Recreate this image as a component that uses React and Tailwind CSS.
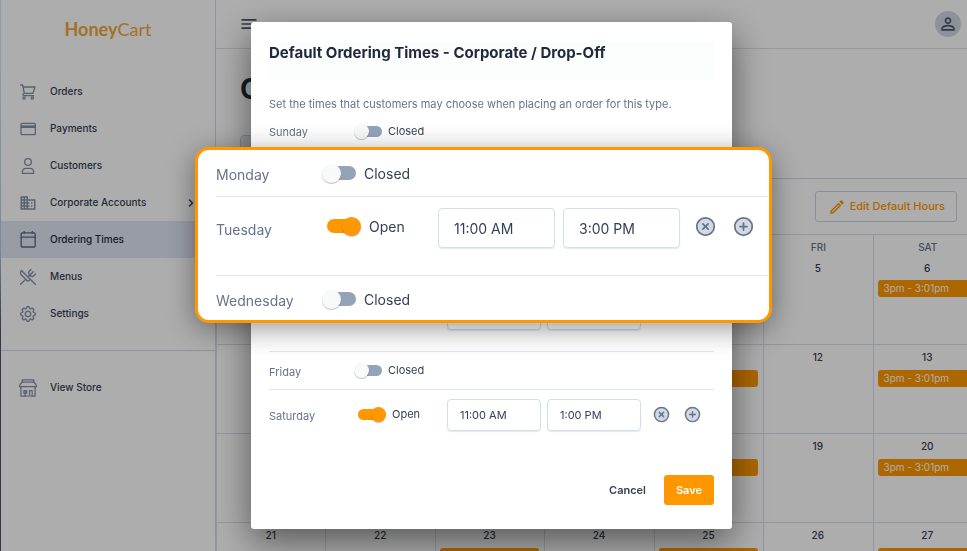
import React from "react";
import { CircleX, CirclePlus, ChevronRight, UtensilsCrossed } from "lucide-react";
import { BsGear } from "react-icons/bs";
import { MdDomain, MdOutlineEdit, MdPersonOutline, MdMenu } from "react-icons/md";

const line = { fill: "none", stroke: "currentColor", strokeWidth: 4, strokeLinecap: "round", strokeLinejoin: "round" };

const CartIcon = () => (
  <svg viewBox="0 0 48 48" className="size-4" {...line}>
    <path d="M2 3h6l5 25h26l6-19H9M13 28c-6 1-5 7 0 7h28" />
    <circle cx="12" cy="42" r="3.5" />
    <circle cx="37" cy="42" r="3.5" />
  </svg>
);
const CardIcon = () => (
  <svg viewBox="0 0 48 48" className="size-4" {...line}>
    <rect x="3" y="7" width="43" height="34" rx="3" />
    <path d="M3 17h43" strokeWidth="8" strokeLinecap="butt" />
  </svg>
);
const PersonIcon = () => (
  <svg viewBox="0 0 48 48" className="size-4" {...line}>
    <circle cx="24" cy="12" r="10" />
    <path d="M7 46v-3c0-7 5-12 11-12h12c6 0 11 5 11 12v3z" />
  </svg>
);
const CalendarIcon = () => (
  <svg viewBox="0 0 48 52" className="h-[17px] w-4" {...line}>
    <rect x="3" y="6" width="43" height="43" rx="3" />
    <path d="M3 19h43M12 1v6M37 1v6" />
  </svg>
);
const StoreIcon = () => (
  <svg viewBox="0 0 56 56" className="size-[18px]" {...line}>
    <path d="M10 3h36v7H10zM8 11l-6 9v4h52v-4l-6-9M6 27v26h13V37M50 27v26H37" />
    <path d="M33 53V36h8v17M15 36h9v8h-9zM19 53h14" strokeWidth="3.5" />
  </svg>
);

const NAV = [
  { label: "Orders", icon: <CartIcon /> },
  { label: "Payments", icon: <CardIcon /> },
  { label: "Customers", icon: <PersonIcon /> },
  { label: "Corporate Accounts", icon: <MdDomain className="size-[18px]" />, more: true },
  { label: "Ordering Times", icon: <CalendarIcon />, active: true },
  { label: "Menus", icon: <UtensilsCrossed className="size-[18px]" strokeWidth={1.8} /> },
  { label: "Settings", icon: <BsGear className="size-4" strokeWidth={0.4} /> },
];

function NavItem({ label, icon, more, active }) {
  return (
    <a
      href="#"
      aria-current={active ? "page" : undefined}
      className={`flex h-[37px] items-center pr-[18px] pl-[17px] text-[10px] font-medium ${active ? "bg-[#e0e6f2] text-[#1e293b]" : "text-[#334155]"}`}
    >
      <span className={`mr-3 flex w-5 justify-center ${active ? "text-[#5b6980]" : "text-[#8290a6]"}`}>{icon}</span>
      <span className="flex-1">{label}</span>
      {more && <ChevronRight className="size-3" strokeWidth={3} />}
    </a>
  );
}

function Sidebar() {
  return (
    <aside className="flex w-[216px] shrink-0 border-r border-[#d3dae6]">
      <div className="w-px bg-linear-to-b from-[#d5e2f4] from-10% via-[#b6c8e6] via-45% to-[#4b5563] to-60%" />
      <div className="flex-1">
        <div className="flex h-[58px] items-center justify-center font-['Lato',sans-serif] text-[18px] text-[#f0a63c]">
          <span className="font-bold">Honey</span>
          <span>Cart</span>
        </div>
        <nav className="pt-[15px]">
          {NAV.map((n) => (
            <NavItem key={n.label} {...n} />
          ))}
          <div className="mt-[18px] border-t border-[#d3dae6] pt-[18px]">
            <NavItem label="View Store" icon={<StoreIcon />} />
          </div>
        </nav>
      </div>
    </aside>
  );
}

const WEEKDAYS = ["SUN", "MON", "TUE", "WED", "THU", "FRI", "SAT"];
const OPEN_COLUMNS = [2, 4, 6];
const WEEKS = [
  ["", 1, 2, 3, 4, 5, 6],
  [7, 8, 9, 10, 11, 12, 13],
  [14, 15, 16, 17, 18, 19, 20],
  [21, 22, 23, 24, 25, 26, 27],
];

function Calendar() {
  return (
    <table className="w-[767px] table-fixed border-collapse">
      <thead>
        <tr>
          {WEEKDAYS.map((d) => (
            <th key={d} className="h-[21px] border-x border-t border-[#d8deea] p-0 pt-1 text-[10px] font-medium text-[#64748b]">
              {d}
            </th>
          ))}
        </tr>
      </thead>
      <tbody>
        {WEEKS.map((week, w) => (
          <tr key={w}>
            {week.map((day, c) => (
              <td
                key={c}
                className="h-[89px] border-x border-b border-[#d8deea] p-0 pt-1 pr-[5px] pl-1 text-center align-top text-[10px] font-medium text-[#334155]"
              >
                <div className="h-4 leading-4">{day}</div>
                {OPEN_COLUMNS.includes(c) && day && (
                  <div
                    className={`h-[17px] rounded-[3px] bg-[#ff9800] px-1.5 text-left leading-[17px] font-normal text-white ${w ? "mt-[5px]" : "mt-1"}`}
                  >
                    3pm - 3:01pm
                  </div>
                )}
              </td>
            ))}
          </tr>
        ))}
      </tbody>
    </table>
  );
}

function Page() {
  return (
    <div className="flex h-screen overflow-hidden bg-white">
      <Sidebar />
      <main className="min-w-0 flex-1 overflow-hidden">
        <header className="flex h-[49px] items-center justify-between border-b border-[#dde2ec] pr-[6px] pl-[23px]">
          <button aria-label="Menu" className="text-[#475569]">
            <MdMenu className="size-5" />
          </button>
          <button aria-label="Account" className="flex size-[26px] items-center justify-center rounded-full bg-[#d0d6e2] text-[#475569]">
            <MdPersonOutline className="size-5" />
          </button>
        </header>
        <div className="h-[129px] pt-5 pl-6">
          <h1 className="text-[28px] leading-10 font-bold text-[#1e293b]">Ordering Times</h1>
          <button className="mt-[26px] h-8 w-28 rounded-t border border-[#cbd5e1] bg-[#e9edf5] text-[11px]">Corporate</button>
        </div>
        <div className="flex h-14 items-center justify-end border-t border-[#d3d8e8] pr-[10px]">
          <button className="flex h-[31px] items-center gap-1 rounded-[3px] border border-[#cbd5e1] pr-[11px] pl-3 text-[11px] font-medium text-[#ff9800]">
            <MdOutlineEdit className="size-[18px]" />
            Edit Default Hours
          </button>
        </div>
        <Calendar />
      </main>
    </div>
  );
}

const SIZES = {
  normal: {
    text: "text-[11px]",
    day: "w-[85px]",
    dayBox: "h-8",
    first: "h-9",
    closed: "h-[38px]",
    open: "h-[63px] pt-[9px]",
    switchBox: "h-[30px]",
    track: "h-[11px] w-6",
    knob: "size-[15px]",
    gap: "mr-1.5",
    openPad: "pl-1",
    toggleWidth: "w-[93px]",
    field: "h-8 w-[94px] px-3 mr-1.5",
    icon: "size-[17px]",
    fieldsEnd: "ml-1.5 gap-[14px]",
  },
  large: {
    text: "text-[14px]",
    day: "w-[106px]",
    dayBox: "h-10",
    first: "h-[46px]",
    closed: "h-[47px]",
    open: "h-[79px] pt-[11px]",
    switchBox: "h-9",
    track: "h-[14px] w-[30px]",
    knob: "size-[19px]",
    gap: "mr-2",
    openPad: "pl-[5px]",
    toggleWidth: "w-[116px]",
    field: "h-10 w-[117px] px-[15px] mr-2",
    icon: "size-[21px]",
    fieldsEnd: "ml-[7px] gap-[17px]",
  },
};

function Toggle({ on, s, label }) {
  return (
    <label className={`flex items-center ${s.text} ${s.toggleWidth} ${s.switchBox} ${on ? s.openPad : ""} text-[#334155]`}>
      <input type="checkbox" role="switch" aria-label={label} defaultChecked={on} className="sr-only" />
      <span className={`flex shrink-0 items-center ${s.gap}`}>
        <span className={`flex items-center rounded-full ${s.track} ${on ? "mr-1 justify-end bg-[#ff9800]" : "ml-1 bg-[#94a3b8]"}`}>
          <span className={`shrink-0 rounded-full shadow-[0_1px_1px_rgba(0,0,0,0.25)] ${s.knob} ${on ? "-mr-1 bg-[#ff9800]" : "-ml-1 bg-[#f8faf9]"}`} />
        </span>
      </span>
      {on ? "Open" : "Closed"}
    </label>
  );
}

function DayRow({ day, from, to, size = "normal", first = false }) {
  const s = SIZES[size];
  const open = Boolean(from);
  const height = open ? `items-start ${s.open}` : `items-center ${first ? s.first : s.closed}`;
  const field = `${s.field} ${s.text} rounded-[4px] border border-[#d5dde8] bg-transparent text-[#334155] shadow-[0_1px_1px_rgba(148,163,184,0.25)]`;
  return (
    <div className={`flex ${height} ${first ? "" : "border-t border-[#e2e8f0]"}`}>
      <div className={`${s.day} ${s.text} ${s.dayBox} flex shrink-0 items-center pt-[3px] text-[#64748b]`}>{day}</div>
      <Toggle on={open} s={s} label={`${day} open`} />
      {open && (
        <>
          <input type="text" aria-label={`${day} opening time`} defaultValue={from} className={field} />
          <input type="text" aria-label={`${day} closing time`} defaultValue={to} className={field} />
          <div className={`flex items-center ${s.switchBox} ${s.fieldsEnd} text-[#64748b]`}>
            <button aria-label={`Remove ${day} hours`}>
              <CircleX className={s.icon} fill="#d3d9e3" />
            </button>
            <button aria-label={`Add ${day} hours`}>
              <CirclePlus className={s.icon} fill="#d3d9e3" />
            </button>
          </div>
        </>
      )}
    </div>
  );
}

function Dialog() {
  return (
    <section
      role="dialog"
      aria-label="Default Ordering Times"
      className="w-[481px] rounded-[3px] bg-white px-[18px] pt-5 pb-6 shadow-[0_12px_36px_rgba(0,0,0,0.5)]"
    >
      <h2 className="h-[38px] bg-[#fcfdfd] text-[15px] leading-[22px] font-bold text-[#1e293b]">
        Default Ordering Times - Corporate / Drop-Off
      </h2>
      <p className="mt-4 h-[17px] text-[11px] leading-[17px] text-[#64748b]">
        Set the times that customers may choose when placing an order for this type.
      </p>
      <DayRow day="Sunday" first />
      <DayRow day="Monday" />
      <DayRow day="Tuesday" from="11:00 AM" to="3:00 PM" />
      <DayRow day="Wednesday" />
      <DayRow day="Thursday" from="11:00 AM" to="3:00 PM" />
      <DayRow day="Friday" />
      <DayRow day="Saturday" from="11:00 AM" to="1:00 PM" />
      <div className="mt-[23px] flex justify-end text-[11px] font-semibold">
        <button className="h-[30px] px-[18px] text-[#334155]">Cancel</button>
        <button className="h-[30px] w-[50px] rounded-[3px] bg-[#ff9800] text-white">Save</button>
      </div>
    </section>
  );
}

function Callout() {
  return (
    <section
      aria-label="Weekday hours close-up"
      className="absolute top-[147px] left-[195px] h-[176px] w-[577px] overflow-hidden rounded-[14px] border-3 border-[#ff9800] bg-white pl-[18px] shadow-[0_6px_28px_rgba(0,0,0,0.4)]"
    >
      <DayRow day="Monday" size="large" first />
      <DayRow day="Tuesday" from="11:00 AM" to="3:00 PM" size="large" />
      <DayRow day="Wednesday" size="large" />
    </section>
  );
}

export default function App() {
  return (
    <div className="relative h-screen overflow-hidden font-['Inter',sans-serif]">
      <Page />
      <div className="fixed inset-0 flex items-center justify-center bg-black/32 pl-4">
        <Dialog />
      </div>
      <Callout />
    </div>
  );
}
